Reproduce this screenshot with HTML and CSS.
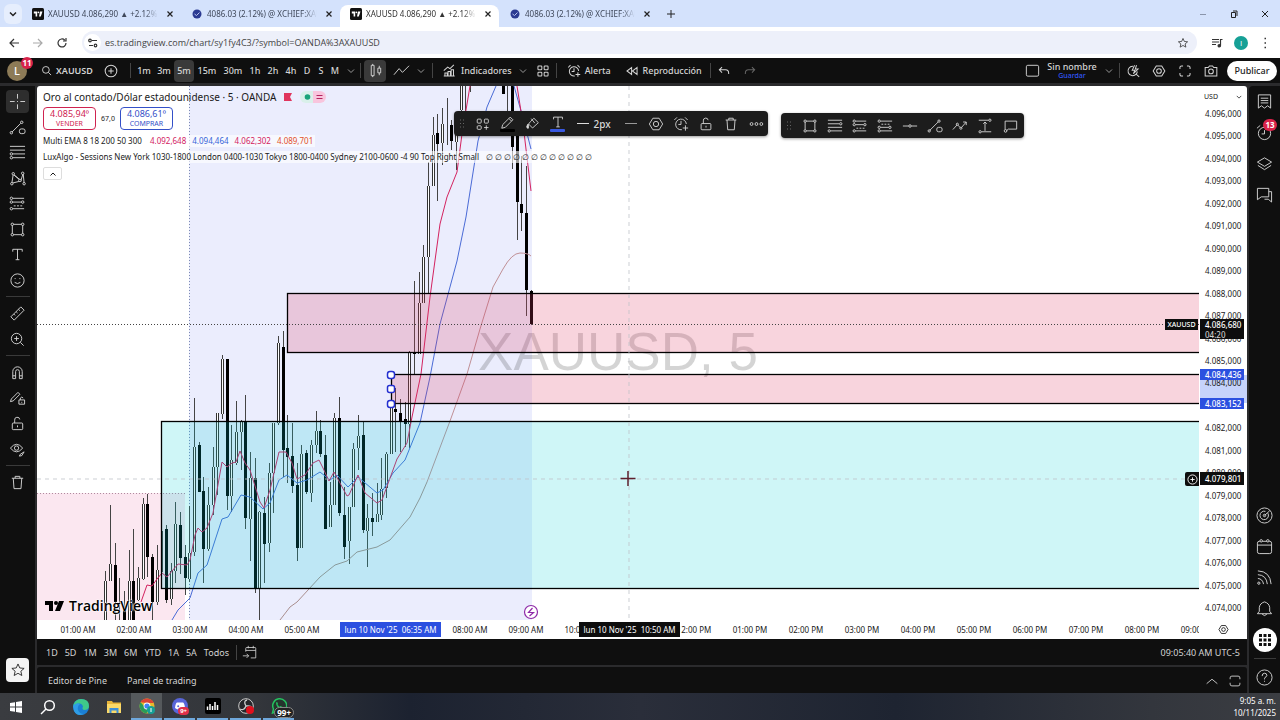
FILE: index.html
```html
<!DOCTYPE html>
<html lang="es">
<head>
<meta charset="utf-8">
<title>XAUUSD 4.086,290 ▲ +2.12% Sin nombre</title>
<link rel="stylesheet" href="styles.css">
</head>
<body>
<svg class="defs" aria-hidden="true">
  <symbol id="chev" viewBox="0 0 8 8"><path d="M1 2.5 4 5.5 7 2.5"/></symbol>
  <symbol id="close" viewBox="0 0 8 8"><path d="M1.5 1.5l5 5m0-5l-5 5"/></symbol>
  <symbol id="tv" viewBox="0 0 12 12"><rect width="12" height="12" rx="1.5" fill="#111" stroke="none"/><path d="M1.8 3.5h3.4v5H3.6v-3H1.800zM8 3.500h2.500L8.800 8.500H7z" fill="#fff" stroke="none"/><circle cx="6.400" cy="4.300" r=".9" fill="#fff" stroke="none"/></symbol>
  <symbol id="xc" viewBox="0 0 12 12"><circle cx="6" cy="6" r="4.500" fill="#2b3a92" stroke="none"/><path d="M3.500 6l2 1.500 3-3" stroke="#b9c4ee"/></symbol>
  <symbol id="cross" viewBox="0 0 18 18"><path d="M9 1v5m0 6v5M1 9h5m6 0h5M8.500 9h1"/></symbol>
  <symbol id="trend" viewBox="0 0 18 18"><path d="M3 14 12.500 4.500"/><circle cx="2.500" cy="14.500" r="1.300"/><circle cx="13.500" cy="3.500" r="1.300"/><rect x="11" y="10.500" width="6" height="5" rx="2"/></symbol>
  <symbol id="fib" viewBox="0 0 18 18"><path d="M1 2.500h16M1 6.500h13M1 10.500h16M4 14.500h13"/><circle cx="15.500" cy="6.500" r="1.300" fill="#111"/><circle cx="2.500" cy="14.500" r="1.300"/></symbol>
  <symbol id="fibl" viewBox="0 0 18 18"><path d="M1 2.500h16M1 6.500h16M4 10.500h13M4 14.500h13"/><circle cx="2.500" cy="10.500" r="1.300"/><circle cx="2.500" cy="14.500" r="1.300"/></symbol>
  <symbol id="pattern" viewBox="0 0 18 18"><path d="M3 14 4.500 4.500l8 7L15 3.500 16 14M3 14l10-2.500L4.500 4.500"/><circle cx="3" cy="14.500" r="1.300" fill="#111"/><circle cx="4.500" cy="4" r="1.300" fill="#111"/><circle cx="14.500" cy="3.500" r="1.300" fill="#111"/><circle cx="11.500" cy="11" r="1.300" fill="#111"/><circle cx="16" cy="14.500" r="1.300" fill="#111"/></symbol>
  <symbol id="longpos" viewBox="0 0 18 18"><path d="M4 3.500h12M4 7.500h9M4 14.500h12"/><path d="M5 11.500h9" stroke-dasharray="2 1.500"/><circle cx="2.500" cy="3.500" r="1.300"/><circle cx="2.500" cy="7.500" r="1.300"/><circle cx="14.500" cy="7.500" r="1.300"/><circle cx="2.500" cy="14.500" r="1.300"/></symbol>
  <symbol id="shortpos" viewBox="0 0 18 18"><path d="M4 3.500h13M4 10.500h9M4 14.500h13"/><path d="M5 7h9" stroke-dasharray="2 1.500"/><circle cx="2.500" cy="3.500" r="1.300"/><circle cx="2.500" cy="10.500" r="1.300"/><circle cx="14.500" cy="10.500" r="1.300"/><circle cx="2.500" cy="14.500" r="1.300"/></symbol>
  <symbol id="rect" viewBox="0 0 18 18"><rect x="3.500" y="3.500" width="11" height="11"/><g fill="#111"><circle cx="3.500" cy="3.500" r="1.300"/><circle cx="14.500" cy="3.500" r="1.300"/><circle cx="3.500" cy="14.500" r="1.300"/><circle cx="14.500" cy="14.500" r="1.300"/></g></symbol>
  <symbol id="text" viewBox="0 0 18 18"><path d="M4 6V3.500h10V6M9 3.500v11M7 14.500h4"/></symbol>
  <symbol id="smile" viewBox="0 0 18 18"><circle cx="9" cy="9" r="7"/><path d="M6 11q3 2.500 6 0M6.500 6.500v1M11.500 6.500v1"/></symbol>
  <symbol id="ruler" viewBox="0 0 18 18"><path d="M2 12.500 12.500 2l3.500 3.500L5.500 16zM5 9.500l1.500 1.500M7.500 7l1.500 1.500M10 4.500l1.500 1.500"/></symbol>
  <symbol id="zoomin" viewBox="0 0 18 18"><circle cx="8" cy="8" r="5.500"/><path d="M12 12l3.500 3.500M8 5.500v5M5.500 8h5"/></symbol>
  <symbol id="magnet" viewBox="0 0 18 18"><path d="M4 15.500V8a5 5 0 0 1 10 0v7.500h-3V8a2 2 0 0 0-4 0v7.500zM4 12.500h3m4 0h3"/></symbol>
  <symbol id="pencil" viewBox="0 0 18 18"><path d="M3 12 11.500 3.500l3 3L6 15l-4 1zM10 5l3 3"/></symbol>
  <symbol id="penlock" viewBox="0 0 18 18"><path d="M2.500 9.500 9.500 2.500l2 2-7 7-3 .8zM10.500 10.500h6v4.500h-6zM12 10.500V8.500q1.500-2 3 0M13.500 12.500v1"/></symbol>
  <symbol id="lock" viewBox="0 0 18 18"><rect x="3.500" y="8.500" width="11" height="7" rx="1"/><path d="M6 8.500V5.500a2.700 2.700 0 0 1 5.400-.8M9 11v2"/></symbol>
  <symbol id="eye" viewBox="0 0 18 18"><path d="M1.500 7.500Q8 -.5 14.500 7.500 8 15.500 1.500 7.500zM11 16l1-2 4-2.500-2.500 4z"/><circle cx="8" cy="7.500" r="2.300"/></symbol>
  <symbol id="trash" viewBox="0 0 18 18"><path d="M3 4.500h12M6.500 4.500v-2h5v2M4.500 4.500l.8 11h7.400l.8-11"/></symbol>
  <symbol id="star" viewBox="0 0 18 18"><path d="M9 2.200l2 4.500 4.900.5-3.700 3.200 1.100 4.800L9 12.700l-4.300 2.500 1.100-4.800-3.700-3.200 4.900-.5z"/></symbol>
  <symbol id="search" viewBox="0 0 18 18"><circle cx="8" cy="8" r="5.500"/><path d="M12 12l4.500 4.500"/></symbol>
  <symbol id="plus" viewBox="0 0 18 18"><circle cx="9" cy="9" r="7.500"/><path d="M9 5.500v7M5.500 9h7"/></symbol>
  <symbol id="candles" viewBox="0 0 18 18"><path d="M4.500 3.500h3v11h-3zM6 2v1.500M6 14.500V16M11.500 6.500h3v5h-3zM13 4v2.500M13 11.500V14"/></symbol>
  <symbol id="line" viewBox="0 0 18 18"><path d="M1 13.500 6.500 7l3.500 4 7-7"/></symbol>
  <symbol id="indic" viewBox="0 0 18 18"><path d="M2.500 15.500v-4h3v4m1-0v-6h3v6m1 0V7.500h3v8M1 15.500h14M1 8.500 6 4l3 2 5-5"/></symbol>
  <symbol id="tiles" viewBox="0 0 18 18"><rect x="2.500" y="2.500" width="5" height="5" rx="1"/><rect x="10.500" y="2.500" width="5" height="5" rx="1"/><rect x="2.500" y="10.500" width="5" height="5" rx="1"/><rect x="10.500" y="10.500" width="5" height="5" rx="1"/></symbol>
  <symbol id="tileadd" viewBox="0 0 18 18"><rect x="2.500" y="3.500" width="4.500" height="4.500" rx="1"/><rect x="10.500" y="3.500" width="4.500" height="4.500" rx="1"/><rect x="2.500" y="11" width="4.500" height="4" rx="1"/><path d="M12.700 10.500v5M10.200 13h5"/></symbol>
  <symbol id="alarm" viewBox="0 0 18 18"><path d="M10 15.400A6 6 0 1 1 15 9M9 5.500V9.500H6M1.500 4.500 4.500 1.500M13.500 1.500l3 3M14 10.500v6M11 13.500h6"/></symbol>
  <symbol id="clock" viewBox="0 0 18 18"><circle cx="9" cy="10" r="6.500"/><path d="M9 6.500V10.500H6M1 4.500 4.500 1.500M13.500 1.500 17 4.500"/></symbol>
  <symbol id="replay" viewBox="0 0 18 18"><path d="M8.500 4.500v9L2.500 9zM15.500 4.500v9L9.500 9z"/></symbol>
  <symbol id="undo" viewBox="0 0 18 18"><path d="M6.500 4 3 7.500 6.500 11M3 7.500h8q4 0 4 4.500v1"/></symbol>
  <symbol id="redo" viewBox="0 0 18 18"><path d="M11.500 4 15 7.500 11.500 11M15 7.500H7q-4 0-4 4.500v1"/></symbol>
  <symbol id="square" viewBox="0 0 18 18"><rect x="2.500" y="3.500" width="13" height="11.500" rx="1.500"/></symbol>
  <symbol id="quick" viewBox="0 0 18 18"><path d="M9 3A6 6 0 1 0 13 13l4 3.500M14.500 9.500q0 2-1.500 3.500M11 1.500 8 8h3.500L9.500 12.500 15.500 6.500H12L13.500 1.500"/></symbol>
  <symbol id="hex" viewBox="0 0 18 18"><path d="M5.500 2.500h7L16.500 9l-4 6.500h-7L1.500 9z"/><circle cx="9" cy="9" r="3"/></symbol>
  <symbol id="full" viewBox="0 0 18 18"><path d="M2.500 6.500v-2a2 2 0 0 1 2-2h2m5 0h2a2 2 0 0 1 2 2v2m0 5v2a2 2 0 0 1-2 2h-2m-5 0h-2a2 2 0 0 1-2-2v-2"/></symbol>
  <symbol id="camera" viewBox="0 0 18 18"><path d="M1.500 4.500h4l1.500-2h4l1.500 2h4v11h-15z"/><circle cx="9" cy="9.500" r="3"/></symbol>
  <symbol id="bucket" viewBox="0 0 18 18"><path d="M6 6.500 10 2.500l5 5-6.500 6-4.500-4.500zM7 3l4 5"/><path d="M3.500 9Q1 12 2.500 13.500T4 12z" fill="currentColor"/></symbol>
  <symbol id="dots" viewBox="0 0 18 18"><circle cx="4" cy="9" r="1.600"/><circle cx="9.500" cy="9" r="1.600"/><circle cx="15" cy="9" r="1.600"/></symbol>
  <symbol id="hline" viewBox="0 0 18 18"><path d="M1 9h6.500m3 0H17"/><circle cx="9" cy="9" r="1.400"/></symbol>
  <symbol id="path" viewBox="0 0 18 18"><path d="M1 13 6 7.500l4 4 6-7M12.500 4.500H16v3.500"/><circle cx="6" cy="7" r="1.200" fill="#1c1c1c"/><circle cx="10" cy="11.500" r="1.200" fill="#1c1c1c"/></symbol>
  <symbol id="range" viewBox="0 0 18 18"><path d="M2 2.500h11M5 15.500h11M9 4.500v10M7 6.500l2-2 2 2"/><circle cx="14.500" cy="2.500" r="1.300"/><circle cx="3.500" cy="15.500" r="1.300"/></symbol>
  <symbol id="callout" viewBox="0 0 18 18"><path d="M3.500 13V3.500h13v9H7l-2 2"/><circle cx="4" cy="14.500" r="1.500"/></symbol>
  <symbol id="grip" viewBox="0 0 8 12"><path d="M2 2h1m2 0h1M2 5.500h1m2 0h1M2 9h1m2 0h1"/></symbol>
  <symbol id="list" viewBox="0 0 18 18"><path d="M2.500 2h13v14l-3.200-2.500L9 16l-3.300-2.500L2.500 16zM5 5.500h8M5 8h8M5 10.500h8"/></symbol>
  <symbol id="layers" viewBox="0 0 18 18"><path d="M9 3l7.500 4.500L9 12 1.500 7.500zM2 11l7 4.500 7-4.500"/></symbol>
  <symbol id="chat" viewBox="0 0 18 18"><path d="M1.500 2.500h12v9h-8l-4 3zM13.500 6h3v11l-3.500-3H9"/></symbol>
  <symbol id="radar" viewBox="0 0 18 18"><circle cx="9" cy="9" r="8"/><path d="M12.500 6.500A4.500 4.500 0 1 1 10 4.600M9 9l5.500-5"/><circle cx="9" cy="9" r="1.300"/></symbol>
  <symbol id="calendar" viewBox="0 0 18 18"><rect x="1.500" y="3.500" width="15" height="13" rx="2"/><path d="M1.500 7.500h15"/><circle cx="5.500" cy="3" r="1.300" fill="#111"/><circle cx="12.500" cy="3" r="1.300" fill="#111"/></symbol>
  <symbol id="feed" viewBox="0 0 18 18"><path d="M2 2Q15 2.500 16 16M2 6q9 .5 10 10M2 10q5 .5 6 6"/><circle cx="3" cy="15" r="1.200"/></symbol>
  <symbol id="bell" viewBox="0 0 18 18"><path d="M1.500 14.500 3.500 12V8q.5-4.500 5.500-6 5 1.500 5.500 6v4l2 2.500zM6.500 15q2.500 3 5 0"/></symbol>
  <symbol id="help" viewBox="0 0 18 18"><circle cx="9" cy="9" r="8"/><path d="M6.500 7.500q0-3 2.500-3t2.500 2.300Q11.500 8 9.500 9 9 9.500 9 11M9 12.500v1"/></symbol>
  <symbol id="goto" viewBox="0 0 18 18"><path d="M4.500 8V4a1 1 0 0 1 1-1h10a1 1 0 0 1 1 1v11.500h-6M4.500 6.500h12M7.500 1v3M13.500 1v3M1 13h7M5.500 10.500 8 13l-2.500 2.500"/></symbol>
  <symbol id="up" viewBox="0 0 18 18"><path d="M3 12l6-5 6 5"/></symbol>
</svg>

<header class="tabs">
  <button class="tabmenu" aria-label="Buscar pestañas"><svg><use href="#chev"/></svg></button>
  <div class="tab"><svg class="fav"><use href="#tv"/></svg><span>XAUUSD 4.086,290 ▲ +2.12% S</span><button aria-label="Cerrar"><svg><use href="#close"/></svg></button></div>
  <div class="tab"><svg class="fav"><use href="#xc"/></svg><span>4086.03 (2.12%) @ XCHIEF:XAU</span><button aria-label="Cerrar"><svg><use href="#close"/></svg></button></div>
  <div class="tab active"><svg class="fav"><use href="#tv"/></svg><span>XAUUSD 4.086,290 ▲ +2.12% S</span><button aria-label="Cerrar"><svg><use href="#close"/></svg></button></div>
  <div class="tab"><svg class="fav"><use href="#xc"/></svg><span>4086.03 (2.12%) @ XCHIEF:XAU</span><button aria-label="Cerrar"><svg><use href="#close"/></svg></button></div>
  <button class="newtab" aria-label="Nueva pestaña"><svg viewBox="0 0 8 8"><path d="M4 0v8M0 4h8"/></svg></button>
  <div class="win">
    <button aria-label="Minimizar"><svg viewBox="0 0 8 8"><path d="M1 4.500h6" stroke="#8a95ab"/></svg></button>
    <button aria-label="Restaurar"><svg viewBox="0 0 8 8"><path d="M1.500 2.500h4v5h-4zM3 1h4v5"/></svg></button>
    <button aria-label="Cerrar ventana"><svg viewBox="0 0 8 8"><path d="M1 1l6 6m0-6L1 7"/></svg></button>
  </div>
</header>

<div class="address">
  <button aria-label="Atrás"><svg viewBox="0 0 12 12"><path d="M11 6H2M6 2 2 6l4 4"/></svg></button>
  <button class="dim" aria-label="Adelante"><svg viewBox="0 0 12 12"><path d="M1 6h9M6 2l4 4-4 4"/></svg></button>
  <button aria-label="Recargar"><svg viewBox="0 0 12 12"><path d="M10 6a4 4 0 1 1-1.200-2.900M10 1v3H7"/></svg></button>
  <div class="urlbox">
    <span class="site"><svg viewBox="0 0 12 12"><path d="M5 3.500h5M2 8.500h4"/><circle cx="3" cy="3.500" r="1.300"/><circle cx="8.500" cy="8.500" r="1.300"/></svg></span>
    <input type="text" aria-label="Dirección" value="es.tradingview.com/chart/sy1fy4C3/?symbol=OANDA%3AXAUUSD">
    <button aria-label="Favorito"><svg viewBox="0 0 18 18"><use href="#star"/></svg></button>
  </div>
  <button class="media" aria-label="Multimedia"><svg viewBox="0 0 12 12"><path d="M1 2.500h7M1 5h7M1 7.500h4M9.500 8.500V2.500h2"/><circle cx="8.300" cy="8.700" r="1.200" fill="currentColor"/></svg></button>
  <button class="profile">I</button>
  <button aria-label="Menú"><svg viewBox="0 0 12 12"><path d="M5.500 1.500h1.500M5.500 6h1.500M5.500 10.500h1.500" stroke-width="1.500"/></svg></button>
</div>

<main class="app">
  <nav class="top">
    <button class="avatar">L<b>11</b></button>
    <button class="sym"><svg><use href="#search"/></svg>XAUUSD</button>
    <button class="w28" aria-label="Comparar"><svg class="i15"><use href="#plus"/></svg></button>
    <i></i>
    <button class="w20 first">1m</button><button class="w20">3m</button><button class="w20 on">5m</button><button class="w26">15m</button><button class="w26">30m</button><button class="w18">1h</button><button class="w18">2h</button><button class="w18">4h</button><button class="w14">D</button><button class="w14">S</button><button class="w14">M</button>
    <button class="w18" aria-label="Intervalos"><svg class="c8"><use href="#chev"/></svg></button>
    <i></i>
    <button class="w22 on" aria-label="Velas"><svg class="i18"><use href="#candles"/></svg></button>
    <button class="w24" aria-label="Línea"><svg class="i18"><use href="#line"/></svg></button>
    <button class="w14" aria-label="Tipos"><svg class="c8"><use href="#chev"/></svg></button>
    <i class="sp"></i>
    <button class="lab"><svg class="i15"><use href="#indic"/></svg>Indicadores</button>
    <button class="w22" aria-label="Más indicadores"><svg class="c8"><use href="#chev"/></svg></button>
    <button class="w18" aria-label="Plantillas"><svg class="i15"><use href="#tiles"/></svg></button>
    <i class="sp"></i>
    <button class="lab"><svg class="i15"><use href="#alarm"/></svg>Alerta</button>
    <button class="lab rep"><svg class="i15"><use href="#replay"/></svg>Reproducción</button>
    <i></i>
    <button class="w26" aria-label="Deshacer"><svg class="i15"><use href="#undo"/></svg></button>
    <button class="w26 off" aria-label="Rehacer"><svg class="i15"><use href="#redo"/></svg></button>
    <span class="grow"></span>
    <button class="w26" aria-label="Diseño"><svg class="i18"><use href="#square"/></svg></button>
    <button class="name">Sin nombre<small>Guardar</small></button>
    <button class="w20" aria-label="Gestionar"><svg class="c8"><use href="#chev"/></svg></button>
    <i></i>
    <button class="w26" aria-label="Búsqueda rápida"><svg class="i15"><use href="#quick"/></svg></button>
    <button class="w26" aria-label="Configuración"><svg class="i15"><use href="#hex"/></svg></button>
    <button class="w26" aria-label="Pantalla completa"><svg class="i15"><use href="#full"/></svg></button>
    <button class="w26" aria-label="Instantánea"><svg class="i15"><use href="#camera"/></svg></button>
    <button class="publish">Publicar</button>
  </nav>

  <div class="panes">
    <aside class="left">
      <div class="grp g8">
        <button class="sel" aria-label="Cruz"><svg><use href="#cross"/></svg></button>
        <button aria-label="Línea de tendencia"><svg><use href="#trend"/></svg></button>
        <button aria-label="Fibonacci"><svg><use href="#fibl"/></svg></button>
        <button aria-label="Patrones"><svg><use href="#pattern"/></svg></button>
        <button aria-label="Posición"><svg><use href="#longpos"/></svg></button>
        <button aria-label="Rectángulo"><svg><use href="#rect"/></svg></button>
        <button aria-label="Texto"><svg><use href="#text"/></svg></button>
        <button aria-label="Iconos"><svg><use href="#smile"/></svg></button>
      </div>
      <hr>
      <div class="grp g2">
        <button aria-label="Medir"><svg><use href="#ruler"/></svg></button>
        <button aria-label="Acercar"><svg><use href="#zoomin"/></svg></button>
      </div>
      <hr>
      <div class="grp g4">
        <button aria-label="Imán"><svg><use href="#magnet"/></svg></button>
        <button aria-label="Modo dibujo"><svg><use href="#penlock"/></svg></button>
        <button aria-label="Bloquear"><svg><use href="#lock"/></svg></button>
        <button aria-label="Ocultar"><svg><use href="#eye"/></svg></button>
      </div>
      <hr>
      <div class="grp g1"><button aria-label="Eliminar"><svg><use href="#trash"/></svg></button></div>
      <button class="fave" aria-label="Favoritos"><svg><use href="#star"/></svg></button>
    </aside>

    <section class="center">
      <div class="chart">
        <div class="plot">
          <svg class="canvas" role="img" aria-label="Gráfico XAUUSD 5 minutos"><g transform="translate(-37 -86)">
            <rect x="189" y="86" width="343" height="534" fill="#ebedfd"/>
            <rect x="37" y="493" width="148" height="127" fill="#fbe7f0"/>
            <text x="618" y="370" class="mark">XAUUSD, 5</text>
            <path class="dot" stroke="#b08a9e" d="M37 493.500H185"/>
            <path class="dot" stroke="#7d8bb5" d="M189.500 86V620"/>
            <path class="wick" d="M105.500 571V620M110.500 505V564M115.500 543V620M119.500 578V620M124.500 591V620M129.500 550V581M133.500 529V620M138.500 567V601M143.500 498V580M147.500 494V577M152.500 554V620M157.500 545V605M162.500 531V572M166.500 525V603M171.500 563V605M175.500 502V583M180.500 512V574M185.500 545V595M189.500 506V582M194.500 398V556M199.500 442V492M203.500 477V583M208.500 487V551M213.500 447V515M217.500 413V495M222.500 355V419M227.500 359V510M231.500 425V512M236.500 401V465M241.500 420V470M245.500 395V529M250.500 452V561M255.500 458V593M259.500 511V620M264.500 497V583M269.500 463V552M273.500 423V513M278.500 336V425M283.500 331V477M287.500 415V483M292.500 423V493M297.500 463V561M301.500 445V548M306.500 450V494M311.500 440V502M316.500 411V453M320.500 420V457M325.500 435V529M330.500 482V527M334.500 413V505M339.500 397V516M344.500 487V559M349.500 507V564M353.500 443V507M358.500 415V470M363.500 422V533M367.500 504V567M372.500 493V536M377.500 483V522M381.500 458V520M386.500 452V498M391.500 400V454M395.500 388V452M400.500 399V452M405.500 402V447M409.500 351V448M414.500 281V374M419.500 272V354M423.500 245V303M428.500 162V294M433.500 117V186M437.500 114V201M442.500 108V165M447.500 98V145M451.500 120V150M456.500 115V170M461.500 86V112M465.500 86V112M470.500 86V92M507.500 86V112M512.500 86V169M517.500 136V240M521.500 156V231M526.500 166V316M531.500 290V325"/>
            <g class="edge"><path id="hollow" d="M105.500 581V620M110.500 564V581M129.500 581V620M138.500 578V600M143.500 504V579M157.500 570V602M171.500 571V599M175.500 524V571M189.500 553V579M194.500 447V552M208.500 505V549M213.500 467V505M217.500 413V467M222.500 359V414M231.500 460V496M236.500 432V463M241.500 422V432M250.500 478V519M259.500 512V588M269.500 473V543M273.500 423V473M278.500 343V423M301.500 454V548M311.500 445V493M316.500 431V445M330.500 505V527M334.500 418V505M349.500 507V541M353.500 449V507M358.500 436V448M367.500 518V531M377.500 514V522M381.500 489V515M386.500 454V488M391.500 408V454M409.500 353V424M419.500 303V354M423.500 257V303M428.500 186V257M433.500 135V186M442.500 124V143M456.500 112V142M461.500 86V110"/></g>
            <use href="#hollow" class="fill"/>
            <path class="body" d="M115.500 565V602M133.500 581V620M124.500 606V620M147.500 504V557M152.500 557V602M166.500 529V600M180.500 525V558M185.500 557V578M199.500 445V492M203.500 491V549M227.500 359V496M245.500 422V518M255.500 478V588M264.500 513V544M283.500 347V450M287.500 448V457M292.500 456V486M297.500 485V548M306.500 453V492M320.500 431V454M325.500 455V529M339.500 418V513M344.500 515V547M363.500 435V530M372.500 518V522M395.500 409V412M400.500 413V421M405.500 419V424M414.500 352V354M437.500 133V144M451.500 125V141M503.500 86V94M512.500 86V147M517.500 136V202M521.500 204V213M526.500 213V290M531.500 291V324"/>
            <g class="ma">
              <path stroke="#a98e8e" d="M280 620 290 607 297 602 320 577 335 565 347 561 357 552 377 547 390 540 410 517 420 498 427 482"/>
              <path stroke="#c09096" d="M427 482 450 421 467 374 480 329 493 287 503 269Q512 253 520 253T531 256"/>
              <path stroke="#4a6bd6" d="M172 620 178 610 190 598 198 573 207 565 222 519 228 517 241 495 250 497 263 509 270 503 279 480 287 475 297 483 307 480 320 472 330 480 337 475 348 487 358 477 377 493 383 490 393 473 405 460 420 423 430 377 440 324 457 261 466 217 478 141 487 107 496 86M514 86 523 118 531 149"/>
              <path stroke="#d3225f" d="M141 602 147 585 152 586 157 579 162 573 167 577 178 564 187 565 190 560 195 535 198 528 202 532 207 528 213 513 222 462 227 467 232 463 236 462 240 451 245 463 250 470 260 502 264 508 270 490 279 452 286 452 292 463 297 479 305 475 313 463 319 460 323 468 329 481 334 472 340 483 347 496 349 495 358 475 365 493 377 503 382 500 397 459 407 443 412 417 421 374 430 297 440 224 447 197 457 172 462 134 470 86M517 86 523 124 531 191"/>
            </g>
            <g class="zone">
              <rect x="287.500" y="293.500" width="3000" height="59" fill="#e13c64" fill-opacity=".22"/>
              <rect x="391.500" y="374.500" width="3000" height="29" fill="#e13c64" fill-opacity=".22"/>
              <rect x="161.500" y="421.500" width="3000" height="167" fill="#00cdd2" fill-opacity=".19"/>
            </g>
            <path class="dot" stroke="#444" d="M37 324.500H3000"/>
            <path class="dash" d="M629 86V620M37 479H3000"/>
            <g class="handle"><rect x="387.500" y="371.500" width="7" height="7" rx="2.500"/><rect x="387.500" y="385.500" width="7" height="7" rx="2"/><rect x="387.500" y="400.500" width="7" height="7" rx="2.500"/></g>
            <path d="M628 471V486M620.500 478.500H635.500" stroke="#5e1f2c" stroke-width="1.500"/>
            <circle cx="531" cy="612" r="6.500" fill="#fff" stroke="#8e2aa8" stroke-width="1.200"/><path d="M532.500 608 528.500 612.500h5L529.500 616" fill="none" stroke="#8e2aa8" stroke-width="1.200"/>
            <rect x="1192" y="92" width="1" height="1"/>
          </g></svg>

          <div class="legend">
            <div class="title">Oro al contado/Dólar estadounidense · 5 · OANDA <svg class="flag" viewBox="0 0 8 8"><path d="M0 0h8L6 4l2 4H0z" fill="#e0355d"/></svg><span class="status"><svg viewBox="0 0 26 12"><path d="M6 0h7v12H6A6 6 0 0 1 6 0z" fill="#d9f0ea"/><path d="M13 0h7a6 6 0 0 1 0 12h-7z" fill="#f8c5dd"/><circle cx="7.500" cy="6" r="2.800" fill="#1aa37a"/><path d="M16.500 4.500h6M16.500 7.500h6" stroke="#b3265f"/></svg></span></div>
            <div class="quote">
              <button class="sell">4.085,94⁰<small>VENDER</small></button>
              <span>67,0</span>
              <button class="buy">4.086,61⁰<small>COMPRAR</small></button>
            </div>
            <div class="ind">Multi EMA 8 18 200 50 300 <span class="v1">4.092,648</span><span class="v2">4.094,464</span><span class="v3">4.062,302</span><span class="v4">4.089,701</span></div>
            <div class="ind">LuxAlgo - Sessions New York 1030-1800 London 0400-1030 Tokyo 1800-0400 Sydney 2100-0600 -4 90 Top Right Small<span class="nul"><span>∅</span><span>∅</span><span>∅</span><span>∅</span><span>∅</span><span>∅</span><span>∅</span><span>∅</span><span>∅</span><span>∅</span><span>∅</span><span>∅</span></span></div>
            <button class="fold" aria-label="Contraer"><svg viewBox="0 0 8 8"><path d="M1.500 5.500 4 3l2.500 2.500"/></svg></button>
          </div>

          <div class="float draw">
            <svg class="grip"><use href="#grip"/></svg>
            <button aria-label="Plantilla"><svg><use href="#tileadd"/></svg></button>
            <button class="u-black" aria-label="Borde"><svg><use href="#pencil"/></svg></button>
            <button aria-label="Fondo"><svg><use href="#bucket"/></svg></button>
            <button class="u-blue" aria-label="Color de texto"><svg><use href="#text"/></svg></button>
            <button class="px"><span class="dashline"></span>2px</button>
            <button aria-label="Estilo"><span class="dashline grey"></span></button>
            <button aria-label="Ajustes"><svg><use href="#hex"/></svg></button>
            <button aria-label="Alerta"><svg><use href="#alarm"/></svg></button>
            <button aria-label="Bloquear"><svg><use href="#lock"/></svg></button>
            <button aria-label="Eliminar"><svg><use href="#trash"/></svg></button>
            <button aria-label="Más"><svg><use href="#dots"/></svg></button>
          </div>
          <div class="float favs">
            <svg class="grip"><use href="#grip"/></svg>
            <button aria-label="Rectángulo"><svg><use href="#rect"/></svg></button>
            <button aria-label="Fibonacci"><svg><use href="#fib"/></svg></button>
            <button aria-label="Posición larga"><svg><use href="#longpos"/></svg></button>
            <button aria-label="Posición corta"><svg><use href="#shortpos"/></svg></button>
            <button aria-label="Línea horizontal"><svg><use href="#hline"/></svg></button>
            <button aria-label="Tendencia"><svg><use href="#trend"/></svg></button>
            <button aria-label="Ruta"><svg><use href="#path"/></svg></button>
            <button aria-label="Rango"><svg><use href="#range"/></svg></button>
            <button aria-label="Nota"><svg><use href="#callout"/></svg></button>
          </div>
          <div class="brand"><svg viewBox="0 0 20 12"><path d="M0 1h8v10H4V5H0zM14 1h5l-4 10h-5z"/><circle cx="11" cy="3" r="2"/></svg>TradingView</div>
          <span class="tag symtag">XAUUSD</span>
          <button class="addtag" aria-label="Añadir"><svg><use href="#plus"/></svg></button>
        </div>

        <div class="prices">
          <select aria-label="Moneda"><option>USD</option></select><svg class="usd"><use href="#chev"/></svg>
          <div class="band"></div>
          <div class="scale">
            <span>4.096,000</span><span>4.095,000</span><span>4.094,000</span><span>4.093,000</span><span>4.092,000</span><span>4.091,000</span><span>4.090,000</span><span>4.089,000</span><span>4.088,000</span><span>4.087,000</span><span>4.086,000</span><span>4.085,000</span><span>4.084,000</span><span>&nbsp;</span><span>4.082,000</span><span>4.081,000</span><span>4.080,000</span><span>4.079,000</span><span>4.078,000</span><span>4.077,000</span><span>4.076,000</span><span>4.075,000</span><span>4.074,000</span>
          </div>
          <span class="tag last">4.086,680<small>04:20</small></span>
          <span class="tag blue b1">4.084,436</span>
          <span class="tag blue b2">4.083,152</span>
          <span class="tag cur">4.079,801</span>
        </div>

        <div class="times">
          <span>01:00 AM</span><span>02:00 AM</span><span>03:00 AM</span><span>04:00 AM</span><span>05:00 AM</span><span></span><span></span><span>08:00 AM</span><span>09:00 AM</span><span>10:00 AM</span><span></span><span>12:00 PM</span><span>01:00 PM</span><span>02:00 PM</span><span>03:00 PM</span><span>04:00 PM</span><span>05:00 PM</span><span>06:00 PM</span><span>07:00 PM</span><span>08:00 PM</span><span>09:00 PM</span>
          <b class="t1">lun 10 Nov '25 &nbsp;06:35 AM</b>
          <b class="t2">lun 10 Nov '25 &nbsp;10:50 AM</b>
        </div>
        <button class="corner" aria-label="Ajustes de escala"><svg><use href="#hex"/></svg></button>
      </div>

      <div class="ranges">
        <button>1D</button><button>5D</button><button>1M</button><button>3M</button><button>6M</button><button>YTD</button><button>1A</button><button>5A</button><button>Todos</button><i></i><button aria-label="Ir a"><svg><use href="#goto"/></svg></button>
        <button class="utc">09:05:40 AM UTC-5</button>
      </div>
      <div class="editor">
        <button>Editor de Pine</button><button>Panel de trading</button>
        <span class="grow"></span>
        <button aria-label="Abrir"><svg><use href="#up"/></svg></button><button aria-label="Maximizar"><svg viewBox="0 0 18 18"><path d="M3.500 7V5.500a2 2 0 0 1 2-2h7a2 2 0 0 1 2 2V7M3.500 11v1.500a2 2 0 0 0 2 2h7a2 2 0 0 0 2-2V11"/></svg></button>
      </div>
    </section>

    <aside class="right">
      <button aria-label="Lista"><svg><use href="#list"/></svg></button>
      <button class="alerts" aria-label="Alertas"><svg><use href="#clock"/></svg><b>13</b></button>
      <button aria-label="Objetos"><svg><use href="#layers"/></svg></button>
      <button aria-label="Chats"><svg><use href="#chat"/></svg></button>
      <span class="grow"></span>
      <button aria-label="Analizadores"><svg><use href="#radar"/></svg></button>
      <button aria-label="Calendario"><svg><use href="#calendar"/></svg></button>
      <button aria-label="Noticias"><svg><use href="#feed"/></svg></button>
      <button aria-label="Notificaciones"><svg><use href="#bell"/></svg></button>
      <button class="apps" aria-label="Productos"><svg viewBox="0 0 24 24"><circle cx="12" cy="12" r="12" fill="#fff" stroke="none"/><path d="M6 7.500h3M10.500 7.500h3M15 7.500h3M6 12h3M10.500 12h3M15 12h3M6 16.500h3M10.500 16.500h3M15 16.500h3" stroke="#111" stroke-width="3"/></svg></button>
      <hr>
      <button aria-label="Ayuda"><svg><use href="#help"/></svg></button>
    </aside>
  </div>
</main>

<footer class="taskbar">
  <button aria-label="Inicio"><svg viewBox="0 0 16 16"><path d="M2 4l5-.8v4.300H2zM8 3l6-1v5.500H8zM2 8.500h5v4.300L2 12zM8 8.500h6V14l-6-1z" fill="#fff"/></svg></button>
  <button aria-label="Buscar"><svg viewBox="0 0 16 16"><circle cx="9.500" cy="6.500" r="4.800" fill="none" stroke="#fff" stroke-width="1.500"/><path d="M6 10l-5 5" stroke="#fff" stroke-width="1.500"/></svg></button>
  <button aria-label="Edge"><svg viewBox="0 0 16 16"><circle cx="8" cy="8" r="8" fill="#1b7fd4"/><path d="M0 7Q2 0 8 0q8 0 8 7 0 4-5 4-2.500-1-1-3.500Q9 4 5.500 4.500T0 7z" fill="#3fc98a"/><path d="M0 7q3-4 7-2-3 2-2 6 1.500 4 6 4Q4 18 1 12z" fill="#2f9de6"/></svg></button>
  <button aria-label="Explorador"><svg viewBox="0 0 16 16"><path d="M1 2h5l1 1.500h8V14H1z" fill="#e8b53a"/><path d="M1 5h14v9H1z" fill="#fbd968"/><path d="M3.500 9h9v5h-2v-2.500h-5V14h-2z" fill="#3d8fd8"/></svg></button>
  <button class="run cur" aria-label="Chrome"><svg viewBox="0 0 16 16"><circle cx="8" cy="8" r="7.500" fill="#e8b92c"/><path d="M1.500 4.200A7.500 7.500 0 0 1 14.800 5H8z" fill="#db4437"/><path d="M1.500 4.200A7.500 7.500 0 0 0 7.500 15.500L9.500 11 5 8z" fill="#2a9d58"/><circle cx="8" cy="8" r="3.400" fill="#fff"/><circle cx="8" cy="8" r="2.600" fill="#4285f4"/><circle cx="12" cy="12" r="4" fill="#16a096"/><path d="M12 10v4" stroke="#fff"/></svg></button>
  <button class="run" aria-label="Discord"><svg viewBox="0 0 16 16"><circle cx="8" cy="8" r="8" fill="#5865d8"/><path d="M3 10q.5-5 2-5.500h6Q12.500 5 13 10l-2.500 1.500-1-1h-3l-1 1z" fill="#fff"/><circle cx="6.200" cy="8.300" r="1" fill="#5865d8"/></svg><b class="red">9+</b></button>
  <button class="run" aria-label="Audio"><svg viewBox="0 0 16 16"><rect width="16" height="16" rx="2" fill="#000"/><path d="M2.500 8.500V12M5 6v6M7.500 8v4M10 4v8M12.500 7v5" stroke="#fff" stroke-width="1.500"/></svg></button>
  <button class="run" aria-label="OBS"><svg viewBox="0 0 16 16"><circle cx="8" cy="8" r="7.300" fill="#26262a" stroke="#ccc"/><path d="M8 8Q5 3 9 2M8 8q6-1 6 3M8 8q-2 5-6 3" fill="none" stroke="#ccc" stroke-width="1.300"/><circle cx="12" cy="12" r="4" fill="#e00f1c"/></svg></button>
  <button class="run" aria-label="WhatsApp"><svg viewBox="0 0 16 16"><path d="M1.500 15l1-4A7 7 0 1 1 5 13.700z" fill="#24352d" stroke="#25c15f" stroke-width="1.500"/><path d="M5 4.500q0 5.500 6 6.500l.5-2-2-1-1 .8-2-2L7 6 6.200 4z" fill="#25c15f"/></svg><b>99+</b></button>
  <div class="when">9:05 a. m.<br>10/11/2025</div>
</footer>
</body>
</html>
```
FILE: styles.css
```css
* { box-sizing: border-box; }
body { margin: 0; min-height: 100vh; display: flex; flex-direction: column; background: #2b2b2d; font: 9px/12px "Noto Sans", sans-serif; color: #111; }
button, input, select { font: inherit; color: inherit; background: none; border: 0; padding: 0; margin: 0; }
button { display: inline-flex; align-items: center; justify-content: center; position: relative; white-space: nowrap; flex: none; }
svg { fill: none; stroke: currentColor; display: block; flex: none; }
.defs { position: absolute; width: 0; height: 0; }
.grow { flex: 1; }

/* browser tabs */
.tabs { display: flex; height: 27px; background: #d4e2fc; align-items: center; padding-left: 4px; font: 8px/13px "Noto Sans", sans-serif; color: #3f485a; }
.tabmenu { width: 18px; height: 20px; border-radius: 6px; background: #e6eefd; color: #222; }
.tabmenu svg { width: 8px; height: 8px; stroke-width: 1.5; }
.tab { display: flex; align-items: center; width: 159px; height: 22px; align-self: flex-end; padding: 0 3px 5px 10px; gap: 4px; }
.tab.active { background: #fff; border-radius: 8px 8px 0 0; color: #333; }
.tab .fav { width: 12px; height: 12px; }
.tab span { flex: 1; min-width: 0; white-space: nowrap; mask-image: linear-gradient(90deg, #000 88%, transparent); }
.tab button { width: 16px; color: #222; }
.tab button svg { width: 8px; height: 8px; stroke-width: 1.2; }
.newtab { width: 26px; color: #222; }
.newtab svg, .win svg { width: 8px; height: 8px; }
.win { margin-left: auto; display: flex; color: #222; }
.win button { width: 31px; }

/* address bar */
.address { display: flex; height: 31px; background: #fff; align-items: center; padding: 0 3px 0 2px; font: 9px/13px "Open Sans", sans-serif; color: #333; }
.address > button { width: 24px; }
.address svg { width: 12px; height: 12px; stroke-width: 1.2; }
.address .dim { color: #aaa; }
.urlbox { flex: 1; display: flex; align-items: center; height: 23px; background: #edf0fa; border-radius: 12px; padding: 0 8px 0 2px; margin: 0 8px; gap: 4px; }
.urlbox input { flex: 1; color: #444; outline: 0; height: 16px; }
.site { width: 17px; height: 17px; border-radius: 50%; background: #fff; display: grid; place-items: center; }
.address .profile { width: 14px; height: 14px; border-radius: 50%; background: #16a096; color: #fff; font-size: 8px; margin: 0 5px; }

/* app */
.app { flex: 1; display: flex; flex-direction: column; min-height: 0; color: #d4d4d4; }
.top { display: flex; align-items: center; height: 25px; background: #0f0f0f; padding: 0 3px 0 7px; font-weight: 500; }
.top > i, .ranges > i { width: 1px; height: 15px; background: #444; flex: none; }
.top > i.sp { margin: 0 4px; }
.top button { height: 22px; }
.avatar { width: 20px; border-radius: 50%; background: #8d7b57; color: #fff; font-size: 11px; }
.top .avatar { height: 20px; }
.avatar b { position: absolute; top: -4px; right: -6px; min-width: 12px; height: 12px; border-radius: 6px; background: #d8234a; font-size: 8px; line-height: 12px; color: #fff; }
.sym { margin-left: 14px; gap: 4px; width: 52px; }
.sym svg { width: 11px; height: 11px; stroke-width: 1.5; }
.top .sym { font-weight: 600; }
.w28 { width: 30px; margin: 0 4px 0 3px; } .w26 { width: 26px; } .w24 { width: 24px; margin: 0 1px 0 3px; } .w22 { width: 22px; } .w20 { width: 20px; } .w18 { width: 18px; } .w14 { width: 14px; }
.first { margin-left: 3px; }
.on { background: #3a3a3a; border-radius: 4px; }
.i15 { width: 14px; height: 14px; stroke-width: 1.3; } .i18 { width: 17px; height: 17px; } .c8 { width: 8px; height: 8px; color: #999; }
.top i + .on { margin-left: 3px; }
.lab { gap: 4px; margin-left: 6px; }
.rep { margin: 0 8px 0 14px; }
.off { color: #666; }
.name { flex-direction: column; width: 54px; line-height: 10px; }
.name small { font-size: 7px; line-height: 8px; color: #2f55f5; }
.top .publish { height: 20px; width: 50px; border-radius: 10px; background: #fff; color: #222; margin-left: 3px; }
.panes { flex: 1; display: flex; gap: 2px; padding-top: 3px; min-height: 0; }
.left { width: 35px; background: #0f0f0f; display: flex; flex-direction: column; align-items: center; padding: 3px 0 11px; }
.left hr { width: 24px; height: 1px; background: #3a3a3a; border: 0; margin: 3px 0 4px; flex: none; }
.grp { display: grid; grid-auto-rows: 1fr; justify-items: center; align-items: center; }
.g8 { height: 204px; } .g4 { height: 102px; } .g2 { height: 51px; } .g1 { height: 25px; }
.grp button { width: 23px; height: 23px; border-radius: 4px; }
.grp svg { width: 17px; height: 17px; }
.sel { background: #2e2e2e; }
.fave { width: 23px; height: 24px; border-radius: 4px; background: #f4f4f4; color: #222; margin-top: auto; }
.fave svg { width: 16px; height: 16px; }

.center { flex: 1; min-width: 0; display: flex; flex-direction: column; }
.chart { flex: 1; display: grid; grid-template: minmax(0, 1fr) 19px / minmax(0, 1fr) 48px; background: #fff; color: #1a1a1a; border-radius: 3px 3px 0 0; min-height: 0; overflow: hidden; }
.plot { position: relative; overflow: hidden; }
.canvas { position: absolute; inset: 0; width: 100%; height: 100%; stroke: none; }
.mark { font: 53px "Liberation Sans", sans-serif; fill: #000; fill-opacity: .17; text-anchor: middle; }
.dot { stroke-dasharray: 1 2; }
.dash { stroke: #bfc3c9; stroke-dasharray: 4 4; stroke-opacity: .8; }
.wick { stroke: #444; }
.edge { stroke: #333; stroke-width: 3; }
.fill { stroke: #fff; stroke-width: 1; }
.body { stroke: #000; stroke-width: 3; }
.ma { fill: none; }
.zone rect { stroke: #000; stroke-width: 1.3; }
.handle rect { fill: #fff; stroke: #2430d0; stroke-width: 1.5; }

.legend { position: relative; padding: 5px 0 0 6px; display: flex; flex-direction: column; align-items: flex-start; }
.title { display: flex; align-items: center; font-size: 10px; line-height: 12px; white-space: nowrap; }
.flag { width: 8px; height: 8px; margin: 0 8px; }
.title svg { stroke: none; }
.status svg { width: 26px; height: 12px; }
.quote { display: flex; align-items: center; gap: 5px; font-size: 7px; margin-top: 4px; }
.quote button { flex-direction: column; width: 53px; height: 23px; border: 1px solid; border-radius: 4px; background: #fff; font-size: 9px; line-height: 10px; }
.quote small { font-size: 7px; line-height: 9px; }
.sell { color: #cf2350; } .buy { color: #3450c8; }
.ind { font-size: 8px; line-height: 12px; padding: 0 2px 0 0; margin-top: 4px; background: rgba(255,255,255,.6); white-space: nowrap; }
.quote + .ind { margin-top: 5px; }
.ind > span { margin-left: 6px; }
.nul { display: inline-flex; }
.nul span { width: 9px; text-align: center; }
.v1 { color: #d3225f; } .v2 { color: #3563d9; } .v3 { color: #d3225f; } .v4 { color: #e2512a; }
.fold { width: 19px; height: 13px; border: 1px solid #ddd; border-radius: 2px; background: #fff; margin-top: 4px; }
.fold svg { width: 8px; height: 8px; }
.float { position: absolute; display: flex; align-items: center; height: 25px; background: #1c1c1c; border-radius: 4px; color: #d8d8d8; box-shadow: 0 1px 3px rgba(0,0,0,.4); }
.float button { width: 25px; height: 25px; }
.float svg { width: 16px; height: 16px; }
.float svg.grip { width: 8px; height: 12px; color: #666; margin: 0 4px; }
.draw { left: 417px; top: 25px; }
.favs { left: 744px; top: 27px; padding-right: 2px; }
.float .px { width: 48px; gap: 4px; font-size: 10px; font-weight: 500; }
.dashline { width: 12px; height: 1px; background: #ddd; }
.dashline.grey { background: #999; }
.u-black svg, .u-blue svg { margin-bottom: 4px; }
.u-black::after, .u-blue::after { content: ""; position: absolute; left: 5px; right: 5px; bottom: 4px; height: 3px; background: #000; border-radius: 1px; }
.u-blue::after { background: #3858e0; }
.brand { position: absolute; left: 8px; bottom: 5px; display: flex; align-items: center; gap: 4px; font: 600 14px/18px "Open Sans", sans-serif; color: #000; text-shadow: 0 0 2px #fff, 0 0 2px #fff, 0 0 1px #fff; }
.brand svg { width: 20px; height: 12px; fill: #000; stroke: none; }
.tag { position: absolute; background: #0d0d0d; color: #fff; font-size: 8px; line-height: 11px; font-weight: 500; }
.symtag { right: 1px; top: 233px; width: 33px; text-align: center; font-size: 7px; }
.addtag { position: absolute; right: 0; top: 386px; width: 14px; height: 14px; background: #0d0d0d; color: #fff; border-radius: 2px 0 0 2px; }
.addtag svg { width: 11px; height: 11px; stroke-width: 1.5; }

.prices { position: relative; display: flex; flex-direction: column; padding: 5px 0 6px; }
.prices select { appearance: none; height: 12px; margin: 0 0 5px 5px; font-size: 7px; flex: none; text-align: left; }
.usd { position: absolute; right: 5px; top: 8px; width: 6px; height: 6px; }
.scale { flex: 1; display: flex; flex-direction: column; justify-content: space-between; padding-left: 6px; font-size: 8px; position: relative; }
.prices .tag { left: 1px; width: 44px; padding-left: 5px; }
.prices .last { top: 233px; }
.last small { display: block; font-size: 8px; line-height: 9px; color: #ccc; }
.prices .blue { background: #2b50e0; }
.b1 { top: 283px; } .b2 { top: 312px; }
.prices .cur { top: 386px; line-height: 13px; }
.band { position: absolute; left: 1px; right: 0; top: 289px; height: 28px; background: #c6d3fb; }
.times { position: relative; display: flex; padding-left: 13px; overflow: hidden; font-size: 8px; line-height: 19px; }
.times span { flex: 0 0 56px; text-align: center; white-space: nowrap; }
.times b { position: absolute; top: 2px; width: 101px; height: 15px; line-height: 15px; text-align: center; color: #fff; font-weight: 400; white-space: nowrap; }
.t1 { left: 303px; background: #2b50e0; } .t2 { left: 542px; background: #0d0d0d; }
.corner svg { width: 11px; height: 11px; stroke-width: 1.4; }

.ranges, .editor { display: flex; align-items: center; height: 26px; background: #0f0f0f; padding: 1px 7px 0 9px; font-size: 9px; }
.ranges { gap: 7px; }
.ranges svg { width: 15px; height: 15px; }
.ranges > i + button { margin-left: -2px; }
.utc { margin-left: auto; }
.editor { margin-top: 2px; padding-left: 11px; gap: 20px; border-radius: 3px 3px 0 0; padding-right: 4px; }
.editor svg { width: 16px; height: 16px; }
.editor button:last-child { margin-left: -13px; }

.right { width: 31px; background: #0f0f0f; display: flex; flex-direction: column; align-items: center; border-radius: 4px 0 0 0; }
.right button { width: 29px; height: 31px; }
.right svg { width: 17px; height: 17px; }
.right .apps svg { width: 24px; height: 24px; }
.right hr { width: 22px; height: 1px; border: 0; background: #3a3a3a; margin: 3px 0; flex: none; }
.alerts b { position: absolute; right: 2px; top: 2px; width: 14px; height: 12px; border-radius: 6px; background: #d8234a; color: #fff; font-size: 8px; line-height: 12px; }

.taskbar { display: flex; height: 27px; background: linear-gradient(90deg, #3a3c40 0, #33363b 20%, #1c2230 32%, #2a2e3a 50%, #1e2431 70%, #33363d 90%, #3b3d42 100%); color: #fff; }
.taskbar button { width: 33px; height: 27px; }
.taskbar button:first-child { width: 31px; }
.taskbar svg { width: 16px; height: 16px; stroke: none; }
.taskbar .run { border-bottom: 2px solid #6fa8dc; width: 31px; margin: 0 1px; }
.taskbar .cur { background: #55595c; }
.run b { position: absolute; right: 0; bottom: 0; font-size: 8px; line-height: 9px; padding: 0 2px; border: 1px solid #888; border-radius: 6px; background: #222; color: #fff; }
.run .red { right: 6px; bottom: 3px; border: 0; background: #e0304a; font-size: 6px; line-height: 8px; }
.when { margin-left: auto; padding: 2px 4px 0 0; text-align: right; font: 8px/12px "Noto Sans", sans-serif; }
```
